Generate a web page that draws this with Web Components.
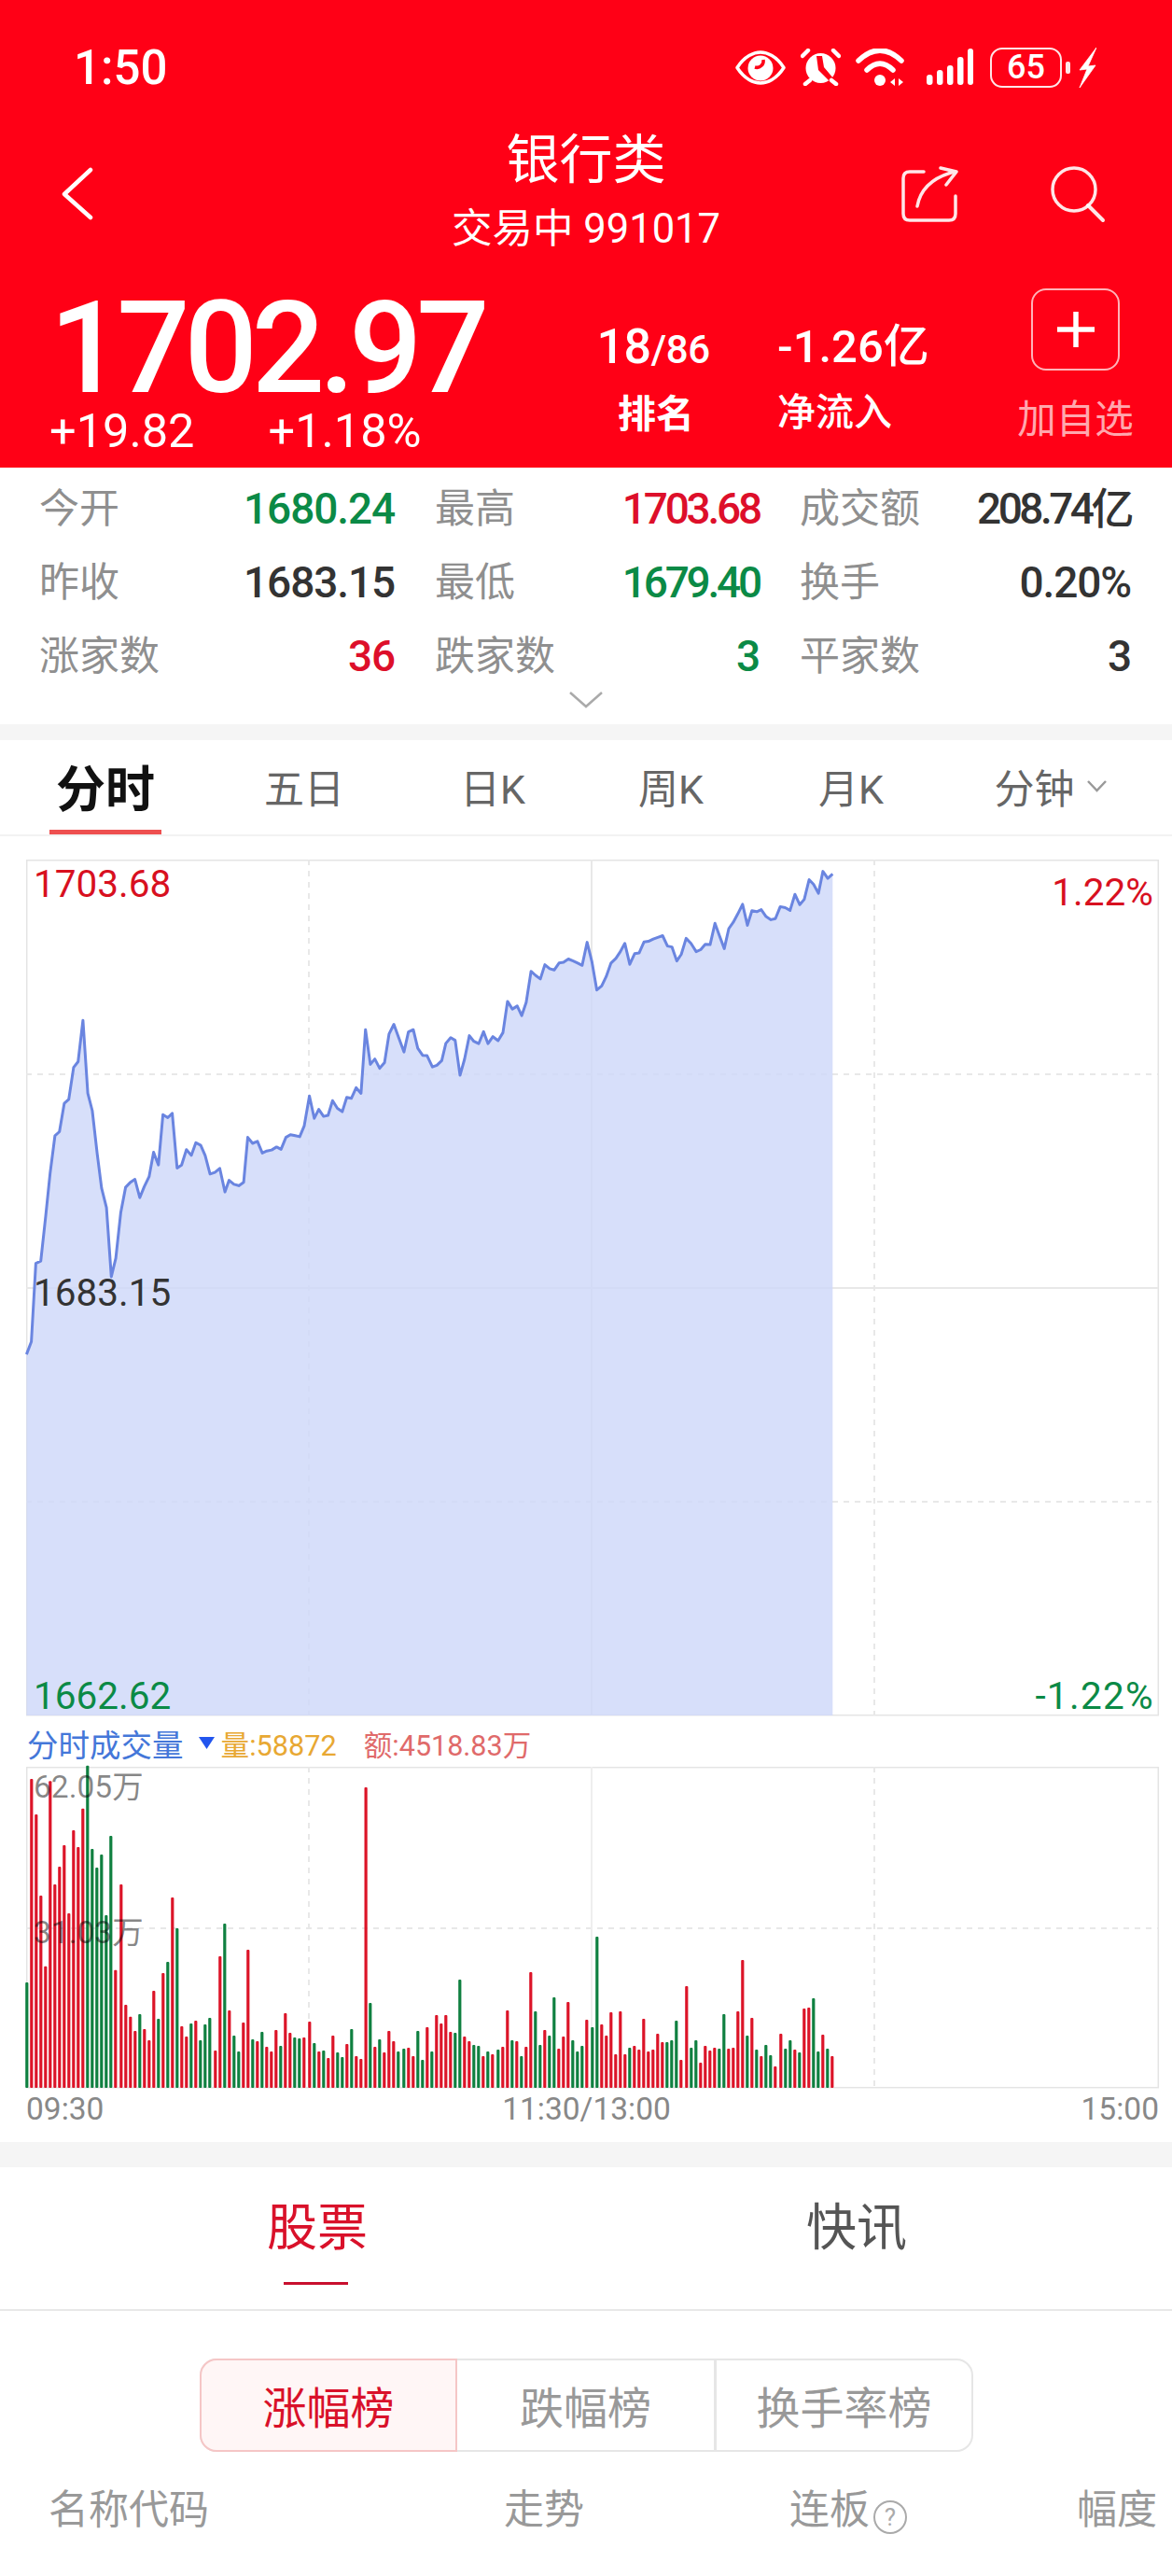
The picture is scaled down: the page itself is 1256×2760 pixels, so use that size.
<!DOCTYPE html>
<html lang="zh">
<head>
<meta charset="utf-8">
<title>银行类</title>
<style>
  html, body { margin: 0; background: #fff; }
  body {
    width: 1256px;
    height: 2760px;
    overflow: hidden;
    font-family: Roboto, "Noto Sans CJK SC", sans-serif;
  }
</style>
</head>
<body>
<quote-header></quote-header>
<stat-panel>
  <stat-cell label="今开" tone="down">1680.24</stat-cell>
  <stat-cell label="最高" tone="up" tight="-3.2">1703.68</stat-cell>
  <stat-cell label="成交额" tight="-3.5">208.74亿</stat-cell>
  <stat-cell label="昨收">1683.15</stat-cell>
  <stat-cell label="最低" tone="down" tight="-3.2">1679.40</stat-cell>
  <stat-cell label="换手">0.20%</stat-cell>
  <stat-cell label="涨家数" tone="up">36</stat-cell>
  <stat-cell label="跌家数" tone="down">3</stat-cell>
  <stat-cell label="平家数">3</stat-cell>
</stat-panel>
<period-tabs></period-tabs>
<trend-chart></trend-chart>
<volume-chart></volume-chart>
<rank-section></rank-section>

<script>
class StatusBar extends HTMLElement {
  constructor() {
    super();
    this.attachShadow({ mode: "open" });
  }

  connectedCallback() {
    this.shadowRoot.innerHTML = `
      <style>
        :host { display: flex; align-items: center; justify-content: space-between; height: 144px; padding: 0 81px 0 79px; color: #fff; }
        .time { font-size: 51px; line-height: 60px; font-weight: 500; padding-top: 2px; }
        .icons { display: flex; align-items: center; }
        svg { display: block; }
        .battery {
          box-sizing: border-box; width: 77px; height: 43px; margin-left: 18px;
          border: 2.5px solid rgba(255,255,255,.9); border-radius: 13px;
          text-align: center; font-size: 36px; line-height: 38px; font-weight: 500;
        }
        .nub { width: 5px; height: 13px; margin: 0 9px 0 4px; border-radius: 2px; background: #fff; opacity: .9; }
      </style>
      <span class="time">1:50</span>
      <div class="icons">
        <svg width="54" height="37" viewBox="0 0 54 37">
          <path d="M2 18.500C10 6 20 2 27 2s17 4 25 16.500C44 31 34 35 27 35S10 31 2 18.500Z" fill="none" stroke="#fff" stroke-width="3.500" stroke-linejoin="round"/>
          <circle cx="27" cy="19" r="13.500" fill="#fff"/>
          <path d="M30 10a7 7 0 0 1-9 8" fill="none" stroke="#ff0016" stroke-width="3.500"/>
        </svg>
        <svg width="43" height="40" viewBox="0 0 43 40" style="margin-left:16px">
          <circle cx="21.500" cy="21" r="16" fill="#fff"/>
          <path d="M17 8h6l2 12 11 13-4 3-13-13Z" fill="#ff0016"/>
          <path d="M2 8 8 2M41 8 35 2M5 38l5-4M38 38l-5-4" stroke="#fff" stroke-width="4.500" stroke-linecap="round"/>
        </svg>
        <svg width="52" height="40" viewBox="0 0 52 40" style="margin-left:16px">
          <path d="M3 13Q26-9 49 13M12 23Q26 9 40 23" fill="none" stroke="#fff" stroke-width="5.500" stroke-linecap="round"/>
          <circle cx="26" cy="34" r="6" fill="#fff"/>
          <path d="M42 32v8l-5-4ZM46 32v8l5-4Z" fill="#fff"/>
        </svg>
        <svg width="50" height="40" viewBox="0 0 50 40" style="margin-left:24px">
          <rect x="0" y="28" width="6.500" height="11" rx="3" fill="#fff"/>
          <rect x="11" y="23" width="6.500" height="16" rx="3" fill="#fff"/>
          <rect x="22" y="18" width="6.500" height="21" rx="3" fill="#fff"/>
          <rect x="33" y="9" width="6.500" height="30" rx="3" fill="#fff"/>
          <rect x="44" y="0" width="6" height="39" rx="3" fill="#fff"/>
        </svg>
        <div class="battery">65</div>
        <div class="nub"></div>
        <svg width="19" height="43" viewBox="0 0 19 43">
          <path d="M19 0 1 24l8-1-8 20 17-24-8 1Z" fill="#fff" stroke="#fff" stroke-width=".8"/>
        </svg>
      </div>
    `;
  }
}

class QuoteHeader extends HTMLElement {
  constructor() {
    super();
    this.attachShadow({ mode: "open" });
  }

  connectedCallback() {
    this.shadowRoot.innerHTML = `
      <style>
        :host { display: block; height: 501px; background: #ff0016; color: #fff; overflow: hidden; }
        .nav { position: relative; display: flex; flex-direction: column; align-items: center; height: 128px; }
        .title { font-size: 57px; line-height: 56px; }
        .sub { font-size: 43.500px; line-height: 48px; margin-top: 22px; }
        .nav svg { position: absolute; }
        .quote { display: flex; height: 229px; }
        .main { width: 589px; padding-left: 50px; box-sizing: border-box; }
        .price { font-size: 138px; line-height: 116px; font-weight: 500; letter-spacing: -6.200px; margin: 43px 0 0 3px; white-space: nowrap; }
        .change { display: flex; gap: 79px; font-size: 50.500px; line-height: 54px; margin: 4px 0 0 3px; }
        .col { display: flex; flex-direction: column; }
        .rank { width: 128px; margin-left: 47px; align-items: center; }
        .flow { width: 240px; margin-left: 69px; }
        .num { font-size: 49px; line-height: 54px; font-weight: 500; margin-top: 73px; white-space: nowrap; }
        .rank .num { font-size: 52px; letter-spacing: -.4px; }
        .num small { font-size: 42px; }
        .cap { font-size: 41px; line-height: 50px; margin-top: 18px; font-weight: 500; }
        .rank .cap { font-weight: 700; font-size: 41px; padding-left: 6px; margin-top: 17px; }
        .add { position: absolute; left: 1090px; width: 125px; display: flex; flex-direction: column; align-items: center; }
        .box {
          box-sizing: border-box; width: 95px; height: 88px; margin-top: 37px;
          border: 2.500px solid rgba(255,255,255,.7); border-radius: 16px;
          display: flex; align-items: center; justify-content: center;
        }
        .add span { font-size: 41.500px; line-height: 50px; margin-top: 28px; color: rgba(255,255,255,.68); white-space: nowrap; }
      </style>
      <status-bar></status-bar>
      <div class="nav">
        <span class="title">银行类</span>
        <span class="sub">交易中 991017</span>
        <svg style="left:64px;top:34px" width="38" height="58" viewBox="0 0 38 58">
          <path d="M33 4 5 30l28 25" fill="none" stroke="#fff" stroke-width="4.500" stroke-linecap="round" stroke-linejoin="round"/>
        </svg>
        <svg style="left:960px;top:32px" width="72" height="66" viewBox="960 176 72 66">
          <path d="M990 184h-15q-7 0-7 7v38q0 7 7 7h42q7 0 7-7v-19" fill="none" stroke="#fff" stroke-opacity=".9" stroke-width="3.500" stroke-linecap="round"/>
          <path d="M983 221q5-28 40-37M1008 180l17 4-11 14" fill="none" stroke="#fff" stroke-opacity=".9" stroke-width="3.500" stroke-linecap="round" stroke-linejoin="round"/>
        </svg>
        <svg style="left:1120px;top:32px" width="68" height="66" viewBox="1120 176 68 66">
          <circle cx="1151" cy="203" r="23" fill="none" stroke="#fff" stroke-opacity=".9" stroke-width="3.500"/>
          <path d="M1166 220l16 16" stroke="#fff" stroke-opacity=".9" stroke-width="4" stroke-linecap="round"/>
        </svg>
      </div>
      <div class="quote">
        <div class="main">
          <div class="price">1702.97</div>
          <div class="change"><span>+19.82</span><span>+1.18%</span></div>
        </div>
        <div class="col rank">
          <span class="num">18<small>/86</small></span>
          <span class="cap">排名</span>
        </div>
        <div class="col flow">
          <span class="num">-1.26亿</span>
          <span class="cap">净流入</span>
        </div>
        <div class="add">
          <div class="box">
            <svg width="40" height="38" viewBox="0 0 40 38"><path d="M0 19h40M20 0v38" stroke="#fff" stroke-width="5.500"/></svg>
          </div>
          <span>加自选</span>
        </div>
      </div>
    `;
  }
}

class StatCell extends HTMLElement {
  constructor() {
    super();
    this.attachShadow({ mode: "open" });
  }

  connectedCallback() {
    const label = this.getAttribute("label") || "";
    const tones = { up: "#dd0f2a", down: "#0b8a46" };
    const color = tones[this.getAttribute("tone")] || "#333333";
    const tight = this.getAttribute("tight") || "-1.1";
    this.shadowRoot.innerHTML = `
      <style>
        :host { display: flex; align-items: center; justify-content: space-between; height: 79px; }
        .label { font-size: 43px; color: #8f8f8f; line-height: 50px; }
        .value { font-size: 46px; font-weight: 500; line-height: 50px; color: ${color}; letter-spacing: ${tight}px; }
      </style>
      <span class="label">${label}</span>
      <span class="value"><slot></slot></span>
    `;
  }
}

class StatPanel extends HTMLElement {
  constructor() {
    super();
    this.attachShadow({ mode: "open" });
  }

  connectedCallback() {
    this.shadowRoot.innerHTML = `
      <style>
        :host { display: block; height: 275px; border-bottom: 17px solid #f5f5f5; }
        .grid { display: grid; grid-template-columns: 381px 348px 355px; column-gap: 43px; padding: 4px 0 0 42px; }
        svg { display: block; margin: -1px auto 0; }
      </style>
      <div class="grid"><slot></slot></div>
      <svg width="36" height="18" viewBox="0 0 36 18"><path d="M1 1l17 15L35 1" fill="none" stroke="#aaa" stroke-width="2.500"/></svg>
    `;
  }
}

class PeriodTabs extends HTMLElement {
  constructor() {
    super();
    this.attachShadow({ mode: "open" });
  }

  connectedCallback() {
    const tabs = [["五日", 224], ["日K", 180], ["周K", 202], ["月K", 184]];
    this.shadowRoot.innerHTML = `
      <style>
        :host { display: flex; box-sizing: border-box; height: 103px; padding-left: 12px; border-bottom: 2px solid #f2f2f2; color: #666; font-size: 43px; }
        .tab { display: flex; align-items: center; justify-content: center; box-sizing: border-box; height: 101px; padding-bottom: 4px; }
        .active { position: relative; width: 202px; font-size: 53px; font-weight: 700; color: #111; }
        .active::after { content: ""; position: absolute; left: 41px; right: 41px; bottom: 0; height: 5px; background: #ee5050; }
        .last { width: 244px; gap: 12px; }
      </style>
      <div class="tab active">分时</div>
      ${tabs.map(([name, width]) => `<div class="tab" style="width:${width}px">${name}</div>`).join("")}
      <div class="tab last">分钟<svg width="23" height="14" viewBox="0 0 23 14"><path d="M2 2l9.500 10L21 2" fill="none" stroke="#999" stroke-width="2.500"/></svg></div>
    `;
  }
}

class TrendChart extends HTMLElement {
  constructor() {
    super();
    this.attachShadow({ mode: "open" });
  }

  points() {
    const left = "71,1543 84,1505 96,1270 109,1263 122,1130 134,1000 147,887 159,875 172,790 184,778 197,682 209,665 222,541 235,760 247,812 260,940 272,1045 285,1103 298,1310 310,1255 323,1118 336,1042 348,1028 361,1018 374,1073 386,1040 399,1010 411,937 424,975 436,824 449,833 461,820 474,984 486,975 499,929 512,946 524,908 537,916 549,947 562,1002 575,997 588,985 602,1056 613,1021 626,1033 639,1037 652,1027 663,892 676,910 689,904 702,939 714,933 727,930 740,921 752,928 765,892 777,884 790,887 802,890 814,858 828,768 841,835 853,808 866,829 878,826 890,782 903,805 916,815 928,772 940,775 953,743 966,760 978,569 991,673 1003,657 1016,685 1029,668 1041,582 1054,553 1066,590 1081,636 1093,576 1106,569 1118,625 1131,646 1143,647 1157,681 1169,676 1182,662 1193,610 1206,593 1218,601 1231,706 1243,658 1256,587 1268,604 1281,611 1294,575 1306,611 1319,590 1333,602 1346,578 1358,484 1371,507 1384,498 1396,527 1408,487 1421,394 1433,406 1446,417 1458,374 1471,386 1483,390 1496,369 1508,367 1521,357 1534,363 1546,369 1558,376";
    const right = "3,307 16,366 29,450 42,438 54,410 67,369 80,355 92,335 104,310 117,373 130,341 142,339 155,306 167,304 180,297 192,292 205,287 218,318 230,321 243,363 255,343 268,295 281,310 295,335 307,329 319,313 332,314 345,250 357,287 370,326 382,266 394,247 406,222 419,193 432,256 444,212 457,215 469,209 482,230 495,239 507,236 520,200 533,203 546,211 559,163 572,194 584,178 597,119 609,133 622,160 634,94 647,115 660,102";
    const convert = (text, offset) =>
      text.split(" ").map((pair) => {
        const [x, y] = pair.split(",").map(Number);
        return [(offset + x / 2.497).toFixed(1), (900 + y / 2.8).toFixed(1)];
      });
    return [...convert(left, 0), ...convert(right, 628)];
  }

  connectedCallback() {
    const pts = this.points();
    const line = pts.map((p) => p.join(",")).join(" ");
    const area = `${pts[0][0]},1838 ${line} ${pts[pts.length - 1][0]},1838`;
    const dashes = "M28 1151H1241M28 1609H1241M331 921V1838M937 921V1838";
    this.shadowRoot.innerHTML = `
      <style>
        :host { display: block; padding: 25px 0 0 28px; font-size: 40.500px; }
        .plot { position: relative; width: 1214px; height: 917px; }
        svg { display: block; overflow: visible; }
        span { position: absolute; line-height: 48px; }
        .hi { left: 8px; top: 2px; color: #d8101f; }
        .mid { left: 8px; top: 440px; color: #333; }
        .lo { left: 8px; top: 872px; color: #0b8a46; }
        .up { right: 6px; top: 11px; color: #d8101f; }
        .dn { right: 5px; top: 872px; color: #0b8a46; letter-spacing: 1.300px; }
      </style>
      <div class="plot">
        <svg width="1214" height="917" viewBox="28 921 1214 917">
          <rect x="28.700" y="921.700" width="1212.600" height="916" fill="none" stroke="#e4e4e4" stroke-width="1.500"/>
          <path d="${dashes}" stroke="#e8e8e8" stroke-width="2" stroke-dasharray="6 6"/>
          <path d="M28 1380H1241M634 921V1838" stroke="#e8e8e8" stroke-width="2"/>
          <polygon points="${area}" fill="#cdd7f9" fill-opacity=".8"/>
          <polyline points="${line}" fill="none" stroke="#6a85e0" stroke-width="3" stroke-linejoin="round"/>
        </svg>
        <span class="hi">1703.68</span>
        <span class="mid">1683.15</span>
        <span class="lo">1662.62</span>
        <span class="up">1.22%</span>
        <span class="dn">-1.22%</span>
      </div>
    `;
  }
}

class VolumeChart extends HTMLElement {
  constructor() {
    super();
    this.attachShadow({ mode: "open" });
  }

  bars() {
    const left = "g86,912 r101,258 r116,372 r131,633 r146,860 r161,265 r176,597 r191,540 r206,471 r221,690 r236,423 r251,477 r266,353 g281,215 g296,483 g311,543 g326,501 g341,696 g356,441 r371,872 r389,597 r404,984 r419,1022 r434,1068 g449,1014 r464,1062 r479,1098 r494,939 g509,1029 r524,882 g539,846 r554,639 g569,738 r584,1053 r599,1086 g614,1044 r629,1035 g644,1098 g659,1047 g674,1026 r692,1131 r707,828 g722,723 r737,1002 g752,1083 g767,1134 r782,1041 r797,807 g812,1095 r827,1101 g842,1071 r857,1119 r872,1134 r887,1065 g902,1116 r917,1011 r932,1074 g947,1089 g962,1092 r977,1089 r995,1038 g1010,1107 r1025,1134 g1040,1131 r1055,1155 r1070,1083 g1085,1137 g1100,1152 r1115,1110 g1130,1062 r1145,1149 r1160,1158 r1176,285 g1190,978 r1205,1119 g1220,1095 r1235,1137 r1250,1068 r1265,1101 g1280,1134 g1298,1125 r1313,1122 r1328,1149 g1343,1068 g1358,1161 r1373,1056 g1388,1134 r1403,1017 r1418,1044 r1433,1017 r1448,1071 g1463,1074 g1478,903 r1493,1086";
    const right = "r158,1101 g173,1113 g188,1116 r203,1149 g218,1134 r233,1143 g251,1128 r266,1119 r281,1002 g296,1098 r311,1101 g326,1149 r341,1119 r356,879 g371,1005 g386,1113 r401,1065 g416,1083 g431,960 r446,1125 r461,1086 r476,975 g491,1098 g506,1134 g521,1116 r536,1032 g554,1056 g569,765 r584,1047 r599,1083 r614,1008 r629,1143 r644,1005 r659,1143 g674,1122 r689,1116 r704,1128 r719,1029 r734,1134 r749,1128 r764,1077 r779,1104 g794,1104 g809,1098 g824,1035 r839,1161 r857,924 g872,1122 g887,1098 r902,1170 r917,1116 r932,1131 r947,1122 g962,1125 g977,1014 r992,1125 r1007,1122 r1022,1005 r1037,840 g1052,1083 r1067,1026 g1082,1128 r1097,1149 g1112,1113 g1127,1146 r1142,1182 r1160,1077 g1175,1125 g1190,1098 r1205,1128 g1220,1137 r1235,996 r1250,993 g1265,963 g1280,1134 r1295,1080 g1310,1125 r1325,1149";
    const toRects = (text, offset) =>
      text.split(" ").map((item) => {
        const [x, y] = item.slice(1).split(",").map(Number);
        const top = 1820 + y / 3;
        const fill = item[0] === "r" ? "#dc1428" : "#0f8040";
        return `<rect x="${(offset + x / 3 - 1.500).toFixed(1)}" y="${top.toFixed(1)}" width="3.200" height="${(2237 - top).toFixed(1)}" rx="1" fill="${fill}"/>`;
      });
    return [...toRects(left, 0), ...toRects(right, 450)].join("");
  }

  connectedCallback() {
    this.shadowRoot.innerHTML = `
      <style>
        :host { display: block; padding-left: 28px; height: 457px; border-bottom: 27px solid #f5f5f5; }
        .head { display: flex; align-items: center; height: 55px; padding: 4px 0 0 1px; box-sizing: border-box; white-space: nowrap; }
        .name { font-size: 33.500px; color: #4477d9; }
        .head svg { margin: 0 7px 0 16px; }
        .vol { font-size: 30.700px; color: #e8a833; }
        .amt { font-size: 30.500px; color: #e06a6a; margin-left: 29px; }
        .plot { position: relative; width: 1214px; height: 344px; }
        .plot > svg { position: absolute; left: 0; top: 0; overflow: visible; }
        .tick { position: absolute; left: 8px; font-size: 33.500px; line-height: 40px; color: rgba(0,0,0,.47); }
        .times { display: flex; justify-content: space-between; width: 1214px; font-size: 33.500px; line-height: 40px; color: #888; padding-top: 3px; }
        .times span:nth-child(2) { margin-left: -13px; }
      </style>
      <div class="head">
        <span class="name">分时成交量</span>
        <svg width="17" height="13" viewBox="0 0 17 13"><path d="M0 0h17L8.500 13Z" fill="#2255ee"/></svg>
        <span class="vol">量:58872</span>
        <span class="amt">额:4518.83万</span>
      </div>
      <div class="plot">
        <svg width="1214" height="344" viewBox="28 1893 1214 344">
          <rect x="28.700" y="1893.700" width="1212.600" height="343" fill="none" stroke="#e4e4e4" stroke-width="1.500"/>
          <path d="M28 2066H1241M331 1893V2237M937 1893V2237" stroke="#e8e8e8" stroke-width="2" stroke-dasharray="6 6"/>
          <path d="M634 1893V2237" stroke="#eeeeee" stroke-width="2"/>
          ${this.bars()}
        </svg>
        <span class="tick" style="top:2px">62.05万</span>
        <span class="tick" style="top:158px">31.03万</span>
      </div>
      <div class="times"><span>09:30</span><span>11:30/13:00</span><span>15:00</span></div>
    `;
  }
}

class RankSection extends HTMLElement {
  constructor() {
    super();
    this.attachShadow({ mode: "open" });
  }

  connectedCallback() {
    this.shadowRoot.innerHTML = `
      <style>
        :host { display: block; }
        .tabs { display: flex; box-sizing: border-box; height: 154px; border-bottom: 2px solid #e8e8e8; }
        .tabs div { position: relative; font-size: 54px; line-height: 60px; padding-top: 36px; }
        .stock { margin-left: 286px; color: #d9112a; }
        .stock::after { content: ""; position: absolute; left: 18px; width: 69px; top: 123px; height: 3px; background: #c8102e; }
        .news { margin-left: 470px; color: #555; }
        .seg { display: flex; box-sizing: border-box; width: 829px; height: 100px; margin: 51px 0 0 214px; border: 2px solid #e6e6e6; border-radius: 18px; font-size: 47px; color: #999; }
        .seg div { display: flex; align-items: center; justify-content: center; box-sizing: border-box; padding-bottom: 2px; }
        .on { width: 276px; margin: -2px 0 -2px -2px; color: #d9112a; background: #fff6f6; border: 2px solid #f5c6c6; border-radius: 18px 0 0 18px; }
        .mid { width: 278px; border-right: 3px solid #e6e6e6; }
        .rest { flex: 1; }
        .cols { position: relative; height: 90px; font-size: 43px; line-height: 50px; color: #999; }
        .cols span { position: absolute; top: 37px; white-space: nowrap; }
        .cols svg { position: absolute; left: 935px; top: 51px; }
      </style>
      <div class="tabs">
        <div class="stock">股票</div>
        <div class="news">快讯</div>
      </div>
      <div class="seg">
        <div class="on">涨幅榜</div>
        <div class="mid">跌幅榜</div>
        <div class="rest">换手率榜</div>
      </div>
      <div class="cols">
        <span style="left:52px">名称代码</span>
        <span style="left:540px">走势</span>
        <span style="left:846px">连板</span>
        <svg width="38" height="38" viewBox="0 0 38 38"><circle cx="19" cy="19" r="17" fill="none" stroke="#aaa" stroke-width="2"/><text x="19" y="28" text-anchor="middle" font-size="26" fill="#aaa" font-family="Roboto, sans-serif">?</text></svg>
        <span style="left:1154px">幅度</span>
      </div>
    `;
  }
}

customElements.define("status-bar", StatusBar);
customElements.define("quote-header", QuoteHeader);
customElements.define("stat-cell", StatCell);
customElements.define("stat-panel", StatPanel);
customElements.define("period-tabs", PeriodTabs);
customElements.define("trend-chart", TrendChart);
customElements.define("volume-chart", VolumeChart);
customElements.define("rank-section", RankSection);
</script>
</body>
</html>
